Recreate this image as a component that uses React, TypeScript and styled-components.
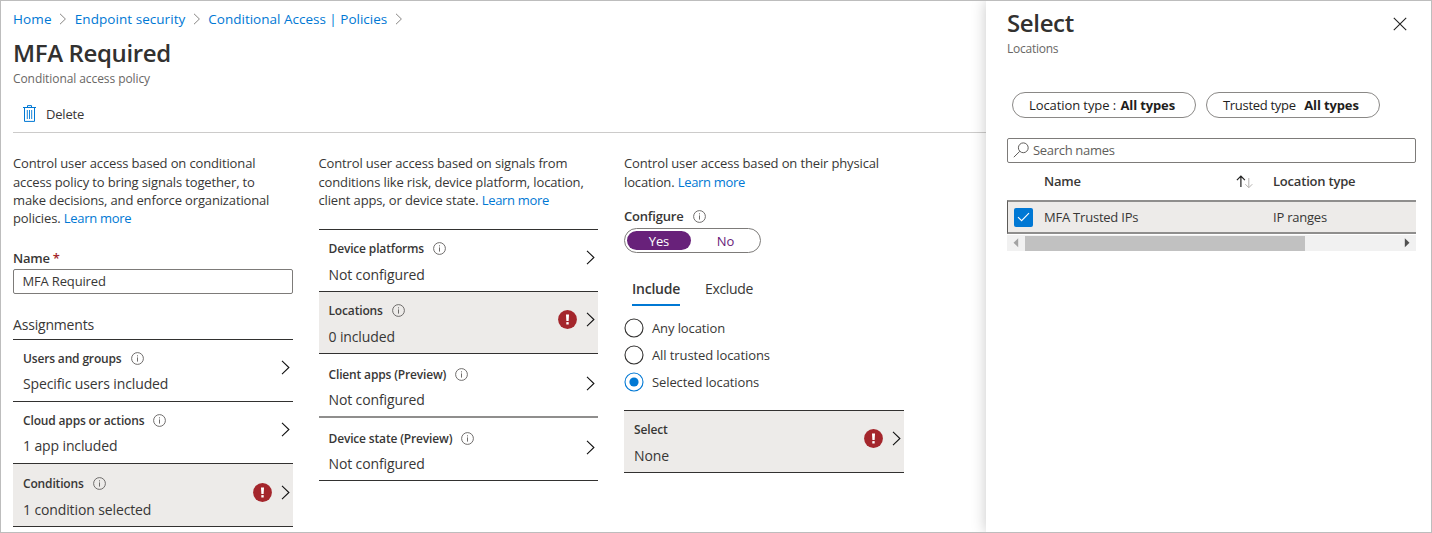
import React from 'react';
import styled, { createGlobalStyle } from 'styled-components';

const ink = '#323130';
const textColor = '#383736';
const blue = '#0078d4';
const purple = '#68217a';

const GlobalStyle = createGlobalStyle`
  * { box-sizing: border-box; }
  body { margin: 0; background: #fff; overflow: hidden; }
  h1, h2, p { margin: 0; }
`;

const Frame = styled.div`
  display: flex;
  width: 1432px;
  height: 533px;
  border: 1px solid #bdbdbd;
  background: #fff;
  overflow: hidden;
  color: ${textColor};
  font-family: 'Open Sans', 'Noto Sans', sans-serif;
  font-size: 13px;
  letter-spacing: -0.14px;
  white-space: nowrap;
`;

const Main = styled.main`
  width: 985px;
  padding-left: 12px;
`;

const Breadcrumb = styled.nav`
  display: flex;
  align-items: center;
  height: 24px;
  margin-top: 6px;
`;

const Crumb = styled.a<{ $track?: number }>`
  color: ${blue};
  font-size: 13.5px;
  letter-spacing: ${(p) => p.$track ?? 0}px;
`;

const CrumbArrow = styled.svg`
  margin: 0 7.5px 0 7.5px;
`;

const Title = styled.h1`
  height: 32px;
  margin-top: 6px;
  color: ${ink};
  font-size: 24px;
  font-weight: 600;
  line-height: 32px;
  letter-spacing: -0.36px;
`;

const Subtitle = styled.p<{ $track: number }>`
  height: 18px;
  margin-top: 1px;
  color: #696765;
  font-size: 12px;
  line-height: 18px;
  letter-spacing: ${(p) => p.$track}px;
`;

const CommandBar = styled.div`
  display: flex;
  align-items: center;
  height: 37px;
  margin-top: 8px;
  padding: 0 0 1px 10px;
  border-bottom: 1px solid #cccbca;
`;

const Command = styled.button`
  display: flex;
  align-items: center;
  gap: 10px;
  padding: 0;
  border: 0;
  background: none;
  color: inherit;
  font: inherit;
  letter-spacing: -0.2px;
`;

const Columns = styled.div`
  display: flex;
  gap: 26px;
  padding-top: 21.4px;
`;

const Column = styled.section`
  width: 279.5px;
`;

const Description = styled.p`
  line-height: 18.2px;
`;

const Link = styled.a`
  color: ${blue};
  letter-spacing: -0.3px;
`;

const FieldLabel = styled.div<{ $top: number }>`
  display: flex;
  align-items: center;
  gap: 9px;
  height: 18px;
  margin-top: ${(p) => p.$top}px;
  font-weight: 600;
  letter-spacing: -0.2px;
`;

const Required = styled.span`
  margin-left: -6px;
  color: #a4262c;
`;

const TextInput = styled.input`
  display: block;
  width: 279.5px;
  height: 25px;
  margin-top: 2px;
  padding: 0 8.5px 1px;
  border: 1px solid #7d7b79;
  border-radius: 2px;
  color: ${textColor};
  font: inherit;
  letter-spacing: -0.16px;
`;

const GroupHeading = styled.h2`
  height: 20px;
  margin: 21px 0 4px;
  font-size: 14px;
  font-weight: 400;
  line-height: 20px;
  letter-spacing: -0.18px;
`;

const RowList = styled.div<{ $top?: number }>`
  margin-top: ${(p) => p.$top ?? 0}px;
  border-top: 1px solid ${ink};
`;

const RowText = styled.div`
  flex: 1;
`;

const RowEnd = styled.div`
  display: flex;
  align-items: center;
  gap: 9px;
`;

const Row = styled.div<{ $active?: boolean; $tall?: boolean; $soft?: boolean }>`
  display: flex;
  align-items: center;
  height: ${(p) => (p.$soft ? 64 : p.$tall ? 63 : 62)}px;
  padding: 0 3px 0 10px;
  border-bottom: ${(p) => (p.$soft ? '2px solid #8f8e8d' : `1px solid ${ink}`)};
  background: ${(p) => (p.$active ? '#edebe9' : 'transparent')};

  ${RowText} {
    padding-top: ${(p) => (p.$tall ? 5 : 3)}px;
  }

  ${RowEnd} {
    padding-bottom: ${(p) => (p.$tall ? 4 : 6)}px;
  }
`;

const RowLabel = styled.div`
  display: flex;
  align-items: center;
  gap: 9px;
  height: 18px;
  font-size: 12px;
  font-weight: 600;
  letter-spacing: -0.16px;
`;

const RowValue = styled.div`
  height: 20px;
  margin-top: 7px;
  font-size: 14px;
  line-height: 20px;
  letter-spacing: -0.12px;
`;

const Toggle = styled.div`
  display: flex;
  width: 137px;
  height: 25px;
  margin-top: 3px;
  padding: 2px;
  border: 1px solid #7d7b79;
  border-radius: 13px;
`;

const ToggleOption = styled.div<{ $on?: boolean }>`
  display: flex;
  align-items: center;
  justify-content: center;
  flex: ${(p) => (p.$on ? '0 0 64px' : '1')};
  padding-left: ${(p) => (p.$on ? 0 : 2)}px;
  border-radius: 10px;
  background: ${(p) => (p.$on ? purple : 'transparent')};
  color: ${(p) => (p.$on ? '#fff' : purple)};
`;

const Tabs = styled.div`
  display: flex;
  gap: 25px;
  margin-top: 25px;
  padding-left: 8px;
`;

const Tab = styled.div<{ $selected?: boolean }>`
  width: 48px;
  height: 28px;
  border-bottom: 2px solid ${(p) => (p.$selected ? blue : 'transparent')};
  font-size: 14px;
  font-weight: ${(p) => (p.$selected ? 600 : 400)};
  line-height: 21px;
  letter-spacing: ${(p) => (p.$selected ? -0.24 : -0.33)}px;
`;

const RadioGroup = styled.div`
  display: flex;
  flex-direction: column;
  gap: 7px;
  margin-top: 12px;
`;

const RadioOption = styled.label`
  display: flex;
  align-items: center;
  gap: 8px;
  height: 20px;
  letter-spacing: -0.1px;
`;

const Panel = styled.aside`
  width: 445px;
  padding: 6px 15px 0 21px;
  background: #fff;
  box-shadow: 0 0 14px rgba(0, 0, 0, 0.22);
`;

const PanelHeader = styled.header`
  display: flex;
  justify-content: space-between;
  align-items: flex-start;
`;

const PanelTitle = styled(Title)`
  margin-top: 0;
`;

const CloseIcon = styled.svg`
  margin: 10px 9.5px 0 0;
`;

const Filters = styled.div`
  display: flex;
  gap: 10px;
  margin-top: 34px;
  padding-left: 5px;
`;

const Pill = styled.div<{ $width: number; $gap: number; $track: number }>`
  display: flex;
  align-items: center;
  gap: ${(p) => p.$gap}px;
  width: ${(p) => p.$width}px;
  height: 26px;
  padding: 0 0 1px 16px;
  border: 1px solid #8a8886;
  border-radius: 13px;
  color: #1f1e1d;
  letter-spacing: ${(p) => p.$track}px;

  b {
    letter-spacing: -0.13px;
  }
`;

const SearchBox = styled.div`
  display: flex;
  align-items: center;
  gap: 4px;
  height: 25px;
  margin-top: 20px;
  padding: 0 0 1px 5px;
  border: 1px solid #7d7b79;
  border-radius: 2px;
  color: #605e5c;
  letter-spacing: -0.31px;
`;

const TableHeader = styled.div`
  display: grid;
  grid-template-columns: 37px 191.5px 37.5px 1fr;
  align-items: center;
  height: 37px;
  padding-bottom: 1px;
  font-weight: 600;
  letter-spacing: -0.2px;
`;

const TableRow = styled.div`
  display: grid;
  grid-template-columns: 36px 229px 1fr;
  align-items: center;
  height: 34px;
  border: solid #8f8e8d;
  border-width: 2px 0 2px 1px;
  border-left-color: #5c5a58;
  background: #edebe9;
  letter-spacing: -0.22px;
`;

const Checkbox = styled.span`
  display: flex;
  align-items: center;
  justify-content: center;
  width: 19px;
  height: 19px;
  margin-left: 6px;
  border-radius: 2px;
  background: ${blue};
`;

const Scrollbar = styled.div`
  display: flex;
  align-items: center;
  height: 16px;
  margin-top: 1px;
  background: #f1f1f1;
`;

const ScrollButton = styled.svg`
  width: 18px;
  height: 16px;
`;

const ScrollThumb = styled.div`
  width: 280px;
  height: 15px;
  margin-right: auto;
  background: #c1c1c1;
`;

const InfoIcon = () => (
  <svg width="13" height="13" viewBox="0 0 13 13" fill="none">
    <circle cx="6.5" cy="6.5" r="5.9" stroke="#605e5c" strokeWidth="0.9" />
    <path d="M6.5 5.4v4.2" stroke="#605e5c" strokeWidth="0.9" />
    <path d="M6.5 3.3v1.1" stroke="#605e5c" strokeWidth="0.9" />
  </svg>
);

const Separator = () => (
  <CrumbArrow width="8" height="12" viewBox="0 0 8 12" fill="none">
    <path d="M1 0.8 6.4 6 1 11.2" stroke="#797775" strokeWidth="0.9" />
  </CrumbArrow>
);

const Chevron = () => (
  <svg width="9" height="15" viewBox="0 0 9 15" fill="none">
    <path d="M1 0.8 7.9 7.5 1 14.2" stroke="#111" strokeWidth="1.1" />
  </svg>
);

const AlertIcon = () => (
  <svg width="19" height="19" viewBox="0 0 19 19">
    <circle cx="9.5" cy="9.5" r="9.4" fill="#a4262c" />
    <path d="M8 4.4h3l-.4 6.5H8.4z" fill="#fff" />
    <rect x="8.3" y="12.1" width="2.4" height="2.4" fill="#fff" />
  </svg>
);

const RadioMark = ({ on }: { on?: boolean }) => (
  <svg width="20" height="20" viewBox="0 0 20 20" fill="none">
    <circle cx="10" cy="10" r="9" stroke={on ? blue : ink} strokeWidth="1.1" />
    {on && <circle cx="10" cy="10" r="4.6" fill={blue} />}
  </svg>
);

type SettingProps = {
  label: string;
  value: string;
  info?: boolean;
  active?: boolean;
  tall?: boolean;
  soft?: boolean;
};

const Setting = ({ label, value, info = true, active, tall, soft }: SettingProps) => (
  <Row $active={active} $tall={tall} $soft={soft}>
    <RowText>
      <RowLabel>
        {label}
        {info && <InfoIcon />}
      </RowLabel>
      <RowValue>{value}</RowValue>
    </RowText>
    <RowEnd>
      {active && <AlertIcon />}
      <Chevron />
    </RowEnd>
  </Row>
);

export default function App() {
  return (
    <>
      <GlobalStyle />
      <Frame>
        <Main>
          <Breadcrumb>
            <Crumb $track={0.15}>Home</Crumb>
            <Separator />
            <Crumb $track={0.05}>Endpoint security</Crumb>
            <Separator />
            <Crumb>Conditional Access | Policies</Crumb>
            <Separator />
          </Breadcrumb>
          <Title>MFA Required</Title>
          <Subtitle $track={-0.08}>Conditional access policy</Subtitle>
          <CommandBar>
            <Command>
              <svg width="13" height="17" viewBox="0 0 13 17" fill="none" stroke={blue}>
                <path d="M0 2.5h13M4.5 2.3V.6h4v1.7M1.5 2.5v13.9h10V2.5" />
                <path d="M4.3 5v9M6.5 5v9M8.7 5v9" strokeWidth="0.9" />
              </svg>
              Delete
            </Command>
          </CommandBar>
          <Columns>
            <Column>
              <Description>
                Control user access based on conditional
                <br />
                access policy to bring signals together, to
                <br />
                make decisions, and enforce organizational
                <br />
                policies. <Link>Learn more</Link>
              </Description>
              <FieldLabel $top={21.6}>
                Name <Required>*</Required>
              </FieldLabel>
              <TextInput defaultValue="MFA Required" />
              <GroupHeading>Assignments</GroupHeading>
              <RowList>
                <Setting label="Users and groups" value="Specific users included" />
                <Setting label="Cloud apps or actions" value="1 app included" />
                <Setting label="Conditions" value="1 condition selected" active tall />
              </RowList>
            </Column>
            <Column>
              <Description>
                Control user access based on signals from
                <br />
                conditions like risk, device platform, location,
                <br />
                client apps, or device state. <Link>Learn more</Link>
              </Description>
              <RowList $top={20}>
                <Setting label="Device platforms" value="Not configured" />
                <Setting label="Locations" value="0 included" active />
                <Setting label="Client apps (Preview)" value="Not configured" tall soft />
                <Setting label="Device state (Preview)" value="Not configured" tall />
              </RowList>
            </Column>
            <Column>
              <Description>
                Control user access based on their physical
                <br />
                location. <Link>Learn more</Link>
              </Description>
              <FieldLabel $top={16.6}>
                Configure
                <InfoIcon />
              </FieldLabel>
              <Toggle>
                <ToggleOption $on>Yes</ToggleOption>
                <ToggleOption>No</ToggleOption>
              </Toggle>
              <Tabs>
                <Tab $selected>Include</Tab>
                <Tab>Exclude</Tab>
              </Tabs>
              <RadioGroup>
                <RadioOption>
                  <RadioMark />
                  Any location
                </RadioOption>
                <RadioOption>
                  <RadioMark />
                  All trusted locations
                </RadioOption>
                <RadioOption>
                  <RadioMark on />
                  Selected locations
                </RadioOption>
              </RadioGroup>
              <RowList $top={18}>
                <Setting label="Select" value="None" info={false} active />
              </RowList>
            </Column>
          </Columns>
        </Main>
        <Panel>
          <PanelHeader>
            <PanelTitle>Select</PanelTitle>
            <CloseIcon width="14" height="14" viewBox="0 0 14 14" fill="none">
              <path d="M.8.8l12.4 12.4M13.2.8.8 13.2" stroke="#222" strokeWidth="1.1" />
            </CloseIcon>
          </PanelHeader>
          <Subtitle $track={-0.25}>Locations</Subtitle>
          <Filters>
            <Pill $width={184} $gap={4.5} $track={-0.09}>
              Location type : <b>All types</b>
            </Pill>
            <Pill $width={174} $gap={8.5} $track={-0.3}>
              Trusted type <b>All types</b>
            </Pill>
          </Filters>
          <SearchBox>
            <svg width="16" height="16" viewBox="0 0 16 16" fill="none" stroke="#605e5c">
              <circle cx="10.3" cy="5.8" r="4.9" />
              <path d="M6.8 9.3.8 15.2" />
            </svg>
            Search names
          </SearchBox>
          <TableHeader>
            <span />
            <span>Name</span>
            <svg width="18" height="13" viewBox="0 0 18 13" fill="none">
              <path d="M4.9 12V1.2M.9 5.1l4-4 4 4" stroke="#222" strokeWidth="1.2" />
              <path d="M12.8 3v9.6M9.3 9.2l3.5 3.5 3.5-3.5" stroke="#b5b3b1" />
            </svg>
            <span>Location type</span>
          </TableHeader>
          <TableRow>
            <Checkbox>
              <svg width="13" height="10" viewBox="0 0 13 10" fill="none">
                <path d="M1 5.2l3.6 3.5L12 1.2" stroke="#fff" strokeWidth="1.1" />
              </svg>
            </Checkbox>
            <span>MFA Trusted IPs</span>
            <span>IP ranges</span>
          </TableRow>
          <Scrollbar>
            <ScrollButton viewBox="0 0 18 16">
              <path d="M11.2 3.3v9L6.5 7.8z" fill="#a3a3a3" />
            </ScrollButton>
            <ScrollThumb />
            <ScrollButton viewBox="0 0 18 16">
              <path d="M6.8 3.3v9l4.7-4.5z" fill="#505050" />
            </ScrollButton>
          </Scrollbar>
        </Panel>
      </Frame>
    </>
  );
}
